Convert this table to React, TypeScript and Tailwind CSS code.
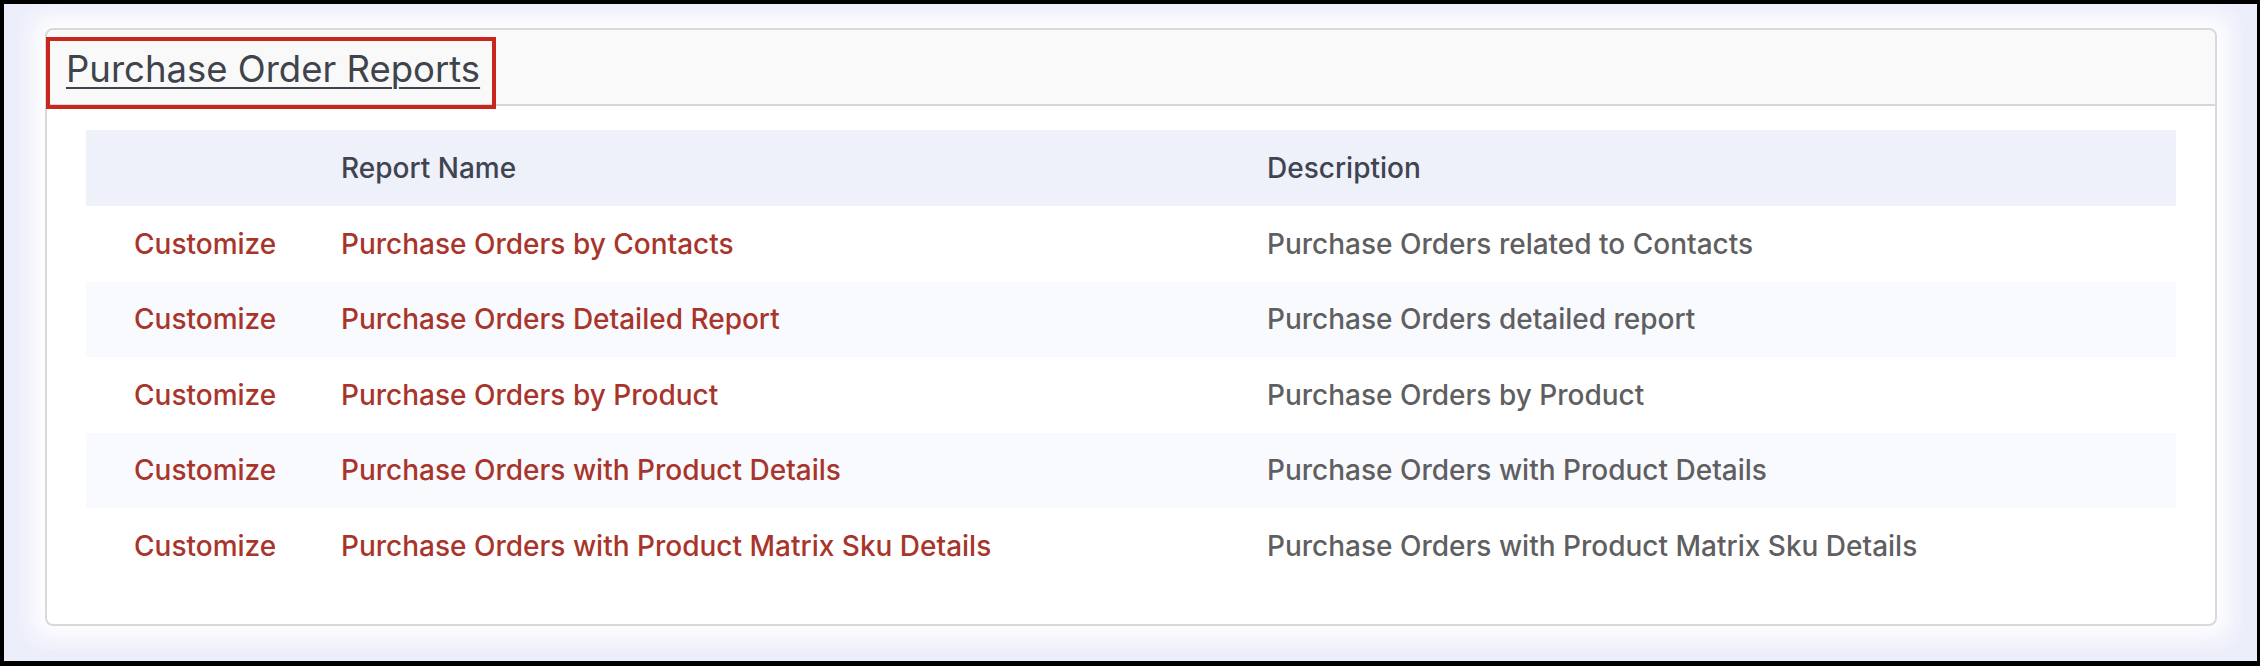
const reports = [
  { name: "Purchase Orders by Contacts", description: "Purchase Orders related to Contacts" },
  { name: "Purchase Orders Detailed Report", description: "Purchase Orders detailed report" },
  { name: "Purchase Orders by Product", description: "Purchase Orders by Product" },
  { name: "Purchase Orders with Product Details", description: "Purchase Orders with Product Details" },
  { name: "Purchase Orders with Product Matrix Sku Details", description: "Purchase Orders with Product Matrix Sku Details" },
];

export default function App() {
  return (
    <main
      className="w-[2260px] h-[666px] bg-black pt-[4px] pl-[4px] pr-[3px] pb-[5px]"
      style={{ fontFamily: "Inter, 'Noto Sans', sans-serif" }}
    >
      <div className="h-full bg-[#eceef9] pl-[16px] pr-[15px]">
        <div className="h-[647px] bg-[#f7f8fd] rounded-[10px] pt-[24px] pl-[25px] pr-[25px] shadow-[inset_0_0_30px_rgba(226,230,248,0.9)]">
          <div className="relative h-[598px] bg-white border-2 border-[#d9d9dc] rounded-[8px] shadow-[0_0_18px_6px_rgba(255,255,255,1)]">
            <div className="h-[76px] bg-[#f9f9f9] border-b-2 border-[#d6d6d8] rounded-t-[7px] flex items-center pl-[19px]">
              <h1 className="text-[36.5px] leading-none text-[#3f444c] underline underline-offset-[5px] decoration-[2px] mt-[4px]">
                Purchase Order Reports
              </h1>
            </div>
            <div className="absolute left-[-1px] top-[7px] w-[450px] h-[72px] border-[4px] border-[#c9261c]" />
            <div className="pt-[24px] px-[39px]">
              <div className="grid grid-cols-[255px_926px_1fr] h-[76px] items-center bg-[#eef0fa] text-[28px] font-medium text-[#3e4450]">
                <div />
                <div>Report Name</div>
                <div>Description</div>
              </div>
              {reports.map((r, i) => (
                <div
                  key={r.name}
                  className={`grid grid-cols-[255px_926px_1fr] h-[75.5px] items-center text-[28px] font-medium ${
                    i % 2 === 1 ? "bg-[#f9fafe]" : "bg-white"
                  }`}
                >
                  <a className="pl-[48px] text-[#a8352b]">Customize</a>
                  <a className="text-[#a8352b]">{r.name}</a>
                  <div className="text-[#5f5f62]">{r.description}</div>
                </div>
              ))}
            </div>
          </div>
        </div>
      </div>
    </main>
  );
}
